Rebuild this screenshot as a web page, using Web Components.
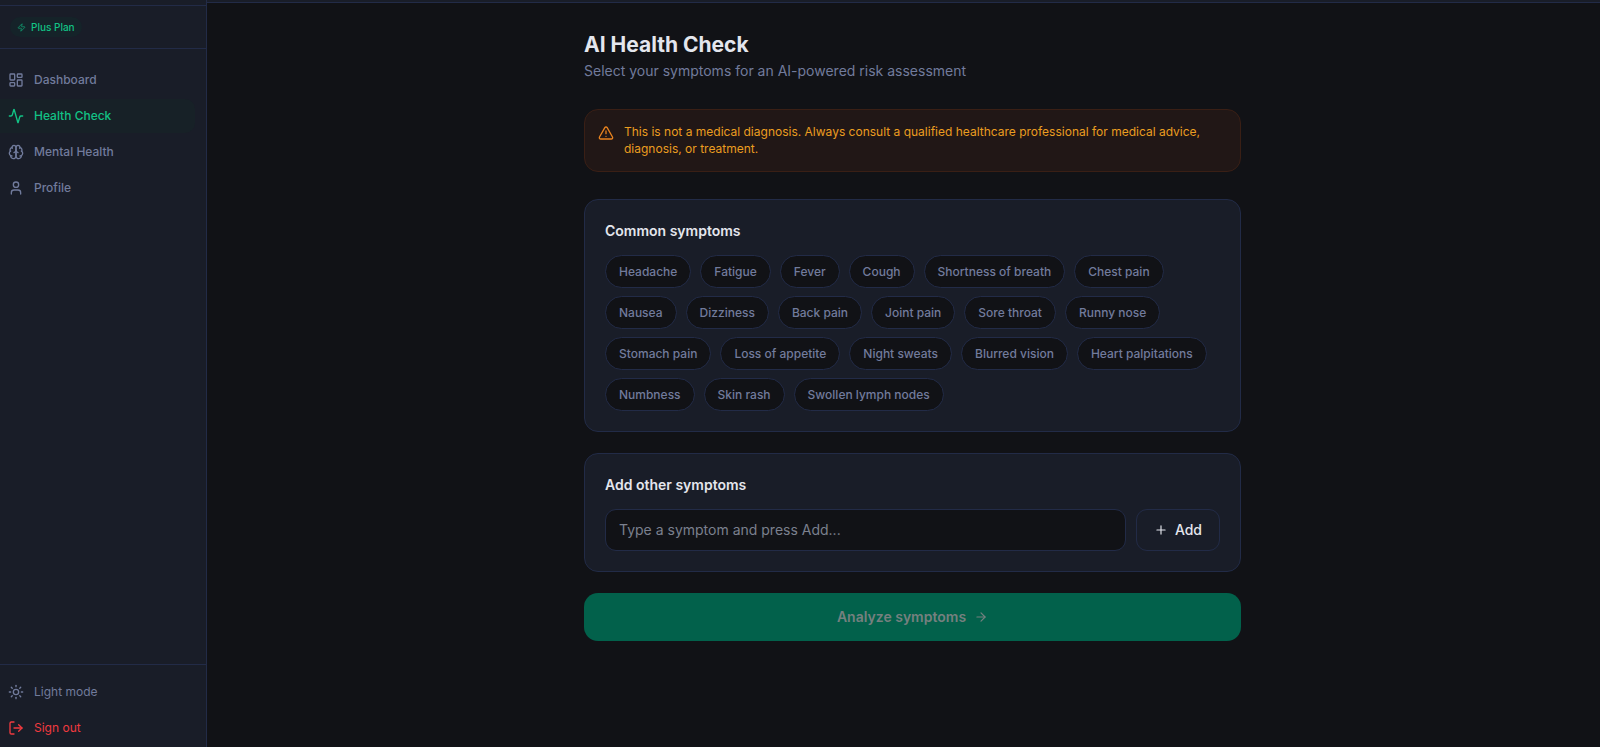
<!DOCTYPE html>
<html lang="en">
<head>
<meta charset="utf-8">
<meta name="viewport" content="width=device-width, initial-scale=1">
<title>AI Health Check</title>
<style>
  body {
    background-color: #111216;
    color: #e4e6ed;
    font-family: Inter, "Liberation Sans", sans-serif;
    font-size: 12px;
    margin: 0;
    --surface: #191d28;
    --page: #111216;
    --line: #222b47;
    --muted: #717b9c;
    --accent: #12c285;
    --danger: #f03a3f;
  }
</style>
</head>
<body>
<health-app>
  <health-sidebar slot="sidebar">
    <plan-badge slot="plan">Plus Plan</plan-badge>
    <nav-item icon="dashboard">Dashboard</nav-item>
    <nav-item icon="activity" active>Health Check</nav-item>
    <nav-item icon="brain">Mental Health</nav-item>
    <nav-item icon="user">Profile</nav-item>
    <nav-item slot="footer" icon="sun" action>Light mode</nav-item>
    <nav-item slot="footer" icon="logout" action danger>Sign out</nav-item>
  </health-sidebar>
  <page-title>
    AI Health Check
    <span slot="detail">Select your symptoms for an AI-powered risk assessment</span>
  </page-title>
  <health-notice>This is not a medical diagnosis. Always consult a qualified healthcare professional for medical advice, diagnosis, or treatment.</health-notice>
  <health-card label="Common symptoms">
    <symptom-list></symptom-list>
  </health-card>
  <health-card label="Add other symptoms">
    <symptom-entry></symptom-entry>
  </health-card>
  <analyze-button>Analyze symptoms</analyze-button>
</health-app>

<script>
  const ICONS = {
    activity: '<path d="M22 12h-2.48a2 2 0 0 0-1.93 1.46l-2.35 8.36a.25.25 0 0 1-.48 0L9.24 2.18a.25.25 0 0 0-.48 0l-2.35 8.36A2 2 0 0 1 4.49 12H2"/>',
    alert: '<path d="m21.73 18-8-14a2 2 0 0 0-3.48 0l-8 14A2 2 0 0 0 4 21h16a2 2 0 0 0 1.73-3"/><path d="M12 9v4"/><path d="M12 17h.01"/>',
    arrow: '<path d="M5 12h14"/><path d="m12 5 7 7-7 7"/>',
    brain: '<path d="M12 5a3 3 0 1 0-5.997.125 4 4 0 0 0-2.526 5.77 4 4 0 0 0 .556 6.588A4 4 0 1 0 12 18Z"/><path d="M12 5a3 3 0 1 1 5.997.125 4 4 0 0 1 2.526 5.77 4 4 0 0 1-.556 6.588A4 4 0 1 1 12 18Z"/><path d="M15 13a4.5 4.5 0 0 1-3-4 4.5 4.5 0 0 1-3 4"/><path d="M17.599 6.5a3 3 0 0 0 .399-1.375"/><path d="M6.003 5.125A3 3 0 0 0 6.401 6.5"/><path d="M3.477 10.896a4 4 0 0 1 .585-.396"/><path d="M19.938 10.5a4 4 0 0 1 .585.396"/><path d="M6 18a4 4 0 0 1-1.967-.516"/><path d="M19.967 17.484A4 4 0 0 1 18 18"/>',
    dashboard: '<rect width="7" height="9" x="3" y="3" rx="1"/><rect width="7" height="5" x="14" y="3" rx="1"/><rect width="7" height="9" x="14" y="12" rx="1"/><rect width="7" height="5" x="3" y="16" rx="1"/>',
    logout: '<path d="M9 21H5a2 2 0 0 1-2-2V5a2 2 0 0 1 2-2h4"/><path d="m16 17 5-5-5-5"/><path d="M21 12H9"/>',
    plus: '<path d="M5 12h14"/><path d="M12 5v14"/>',
    sun: '<circle cx="12" cy="12" r="4"/><path d="M12 2v2"/><path d="M12 20v2"/><path d="m4.93 4.93 1.41 1.41"/><path d="m17.66 17.66 1.41 1.41"/><path d="M2 12h2"/><path d="M20 12h2"/><path d="m6.34 17.66-1.41 1.41"/><path d="m19.07 4.93-1.41 1.41"/>',
    user: '<path d="M19 21v-2a4 4 0 0 0-4-4H9a4 4 0 0 0-4 4v2"/><circle cx="12" cy="7" r="4"/>',
    zap: '<path d="M4 14a1 1 0 0 1-.78-1.63l9.9-10.2a.5.5 0 0 1 .86.46l-1.92 6.02A1 1 0 0 0 13 10h7a1 1 0 0 1 .78 1.63l-9.9 10.2a.5.5 0 0 1-.86-.46l1.92-6.02A1 1 0 0 0 11 14z"/>'
  };

  // Shared setup
  // Clones the markup into an open root
  class HealthElement extends HTMLElement {
    constructor() {
      super();

      const template = document.createElement( 'template' );
      template.innerHTML = this.constructor.markup;

      // Root
      this.attachShadow( {mode: 'open'} );
      this.shadowRoot.appendChild( template.content.cloneNode( true ) );
    }
  }

  class HealthIcon extends HealthElement {
    static markup = /* template */ `
      <style>
        :host {
          display: block;
          flex-shrink: 0;
          height: var( --icon-size, 16px );
          width: var( --icon-size, 16px );
        }

        svg {
          display: block;
          fill: none;
          height: 100%;
          stroke: currentColor;
          stroke-linecap: round;
          stroke-linejoin: round;
          stroke-width: 2;
          width: 100%;
        }
      </style>
      <svg viewBox="0 0 24 24" aria-hidden="true"></svg>
    `;

    connectedCallback() {
      this.shadowRoot.querySelector( 'svg' ).innerHTML = ICONS[this.getAttribute( 'name' )];
    }
  }

  class HealthApp extends HealthElement {
    static markup = /* template */ `
      <style>
        :host {
          display: grid;
          grid-template-columns: 207px 1fr;
          min-height: 100vh;
        }

        .page {
          display: flex;
          flex-direction: column;
        }

        header {
          background-color: var( --surface );
          border-bottom: 1px solid var( --line );
          height: 2px;
        }

        main {
          box-sizing: border-box;
          display: flex;
          flex-direction: column;
          gap: 21px;
          margin: 0 auto;
          max-width: 689px;
          padding: 27px 16px;
          width: 100%;
        }

        /* The page gutter keeps the column clear of the sidebar */
        .body {
          padding-left: 18px;
        }
      </style>
      <slot name="sidebar"></slot>
      <div class="page">
        <header></header>
        <div class="body">
          <main><slot></slot></main>
        </div>
      </div>
    `;
  }

  class HealthSidebar extends HealthElement {
    static markup = /* template */ `
      <style>
        :host {
          background-color: var( --surface );
          border-right: 1px solid var( --line );
          box-sizing: border-box;
          display: flex;
          flex-direction: column;
        }

        .plan {
          border-bottom: 1px solid var( --line );
          border-top: 1px solid var( --line );
          margin-top: 5px;
          padding: 11px 10px;
        }

        nav {
          display: flex;
          flex: 1;
          flex-direction: column;
          gap: 2px;
          padding: 14px 11px 14px 0;
        }

        footer {
          border-top: 1px solid var( --line );
          display: flex;
          flex-direction: column;
          gap: 2px;
          padding: 10px 11px 2px 0;
        }
      </style>
      <div class="plan"><slot name="plan"></slot></div>
      <nav aria-label="Main"><slot></slot></nav>
      <footer><slot name="footer"></slot></footer>
    `;
  }

  class PlanBadge extends HealthElement {
    static markup = /* template */ `
      <style>
        :host {
          --icon-size: 9px;
          align-items: center;
          background-color: #152329;
          border-radius: 10px;
          color: var( --accent );
          display: inline-flex;
          font-size: 10px;
          font-weight: 500;
          gap: 5px;
          line-height: 20px;
          padding: 0 7px;
          vertical-align: top;
        }

        health-icon {
          opacity: 0.8;
        }
      </style>
      <health-icon name="zap"></health-icon>
      <span><slot></slot></span>
    `;
  }

  class NavItem extends HealthElement {
    static markup = /* template */ `
      <style>
        :host {
          color: var( --muted );
          display: block;
        }

        :host( [active] ) {
          color: var( --accent );
        }

        :host( [danger] ) {
          color: var( --danger );
        }

        a,
        button {
          align-items: center;
          background: none;
          border: 0;
          border-radius: 0 10px 10px 0;
          box-sizing: border-box;
          color: inherit;
          cursor: pointer;
          display: flex;
          font: inherit;
          font-weight: 500;
          gap: 10px;
          line-height: 18px;
          padding: 8px;
          text-align: left;
          text-decoration: none;
          width: 100%;
        }

        :host( [action] ) button {
          font-weight: 400;
        }

        :host( [active] ) a {
          background-color: #172127;
        }
      </style>
    `;

    connectedCallback() {
      const control = document.createElement( this.hasAttribute( 'action' ) ? 'button' : 'a' );
      control.innerHTML = `<health-icon name="${this.getAttribute( 'icon' )}"></health-icon><span><slot></slot></span>`;

      if( this.hasAttribute( 'action' ) ) {
        control.type = 'button';
      } else {
        control.href = '#';
      }

      if( this.hasAttribute( 'active' ) ) {
        control.setAttribute( 'aria-current', 'page' );
      }

      this.shadowRoot.appendChild( control );
    }
  }

  class PageTitle extends HealthElement {
    static markup = /* template */ `
      <style>
        :host {
          display: block;
          margin-bottom: 7px;
        }

        h1 {
          font-size: 21px;
          font-weight: 700;
          line-height: 30px;
          margin: 0;
        }

        p {
          color: var( --muted );
          font-size: 14px;
          line-height: 20px;
          margin: 1px 0 0 0;
        }
      </style>
      <h1><slot></slot></h1>
      <p><slot name="detail"></slot></p>
    `;
  }

  class HealthNotice extends HealthElement {
    static markup = /* template */ `
      <style>
        :host {
          --icon-size: 16px;
          align-items: flex-start;
          background-color: #211716;
          border: 1px solid #3a1f15;
          border-radius: 14px;
          box-sizing: border-box;
          color: #eb9d20;
          display: flex;
          gap: 10px;
          line-height: 17px;
          margin-bottom: 6px;
          padding: 13px 13px 14px;
        }

        health-icon {
          color: #e8831f;
          margin-top: 2px;
        }

        p {
          margin: 0;
        }
      </style>
      <health-icon name="alert"></health-icon>
      <p><slot></slot></p>
    `;
  }

  class HealthCard extends HealthElement {
    static markup = /* template */ `
      <style>
        :host {
          background-color: var( --surface );
          border: 1px solid var( --line );
          border-radius: 14px;
          box-sizing: border-box;
          display: block;
          padding: 20px;
        }

        h2 {
          font-size: 14px;
          font-weight: 600;
          line-height: 22px;
          margin: 0 0 13px 0;
        }
      </style>
      <h2></h2>
      <slot></slot>
    `;

    connectedCallback() {
      this.shadowRoot.querySelector( 'h2' ).textContent = this.getAttribute( 'label' );
    }
  }

  class SymptomList extends HealthElement {
    static markup = /* template */ `
      <style>
        :host {
          display: flex;
          flex-wrap: wrap;
          gap: 8px 9px;
        }

        button {
          background-color: var( --page );
          border: 1px solid var( --line );
          border-radius: 17px;
          color: var( --muted );
          cursor: pointer;
          font: inherit;
          font-weight: 500;
          line-height: 17px;
          padding: 7px 13px;
        }
      </style>
    `;

    connectedCallback() {
      const symptoms = [
        'Headache', 'Fatigue', 'Fever', 'Cough', 'Shortness of breath', 'Chest pain',
        'Nausea', 'Dizziness', 'Back pain', 'Joint pain', 'Sore throat', 'Runny nose',
        'Stomach pain', 'Loss of appetite', 'Night sweats', 'Blurred vision', 'Heart palpitations',
        'Numbness', 'Skin rash', 'Swollen lymph nodes'
      ];

      for( const symptom of symptoms ) {
        const button = document.createElement( 'button' );
        button.type = 'button';
        button.textContent = symptom;
        this.shadowRoot.appendChild( button );
      }
    }
  }

  class SymptomEntry extends HealthElement {
    static markup = /* template */ `
      <style>
        :host {
          display: block;
        }

        form {
          display: flex;
          gap: 10px;
        }

        input,
        button {
          border: 1px solid var( --line );
          border-radius: 11px;
          box-sizing: border-box;
          font: inherit;
          font-size: 14px;
          line-height: 20px;
        }

        input {
          background-color: var( --page );
          color: inherit;
          flex: 1;
          min-width: 0;
          padding: 10px 13px;
        }

        input::placeholder {
          color: #7b808e;
          opacity: 1;
        }

        button {
          --icon-size: 14px;
          align-items: center;
          background: none;
          color: inherit;
          cursor: pointer;
          display: flex;
          font-weight: 500;
          gap: 7px;
          padding: 10px 17px;
        }
      </style>
      <form>
        <input type="text" aria-label="Add other symptoms" placeholder="Type a symptom and press Add...">
        <button type="button"><health-icon name="plus"></health-icon>Add</button>
      </form>
    `;
  }

  class AnalyzeButton extends HealthElement {
    static markup = /* template */ `
      <style>
        :host {
          display: block;
        }

        button {
          --icon-size: 14px;
          align-items: center;
          background-color: #02614b;
          border: 0;
          border-radius: 14px;
          color: #75807f;
          display: flex;
          font: inherit;
          font-size: 14px;
          font-weight: 600;
          gap: 8px;
          justify-content: center;
          line-height: 20px;
          padding: 14px;
          width: 100%;
        }
      </style>
      <button type="button" disabled><span><slot></slot></span><health-icon name="arrow"></health-icon></button>
    `;
  }

  window.customElements.define( 'health-icon', HealthIcon );
  window.customElements.define( 'health-app', HealthApp );
  window.customElements.define( 'health-sidebar', HealthSidebar );
  window.customElements.define( 'plan-badge', PlanBadge );
  window.customElements.define( 'nav-item', NavItem );
  window.customElements.define( 'page-title', PageTitle );
  window.customElements.define( 'health-notice', HealthNotice );
  window.customElements.define( 'health-card', HealthCard );
  window.customElements.define( 'symptom-list', SymptomList );
  window.customElements.define( 'symptom-entry', SymptomEntry );
  window.customElements.define( 'analyze-button', AnalyzeButton );
</script>
</body>
</html>
